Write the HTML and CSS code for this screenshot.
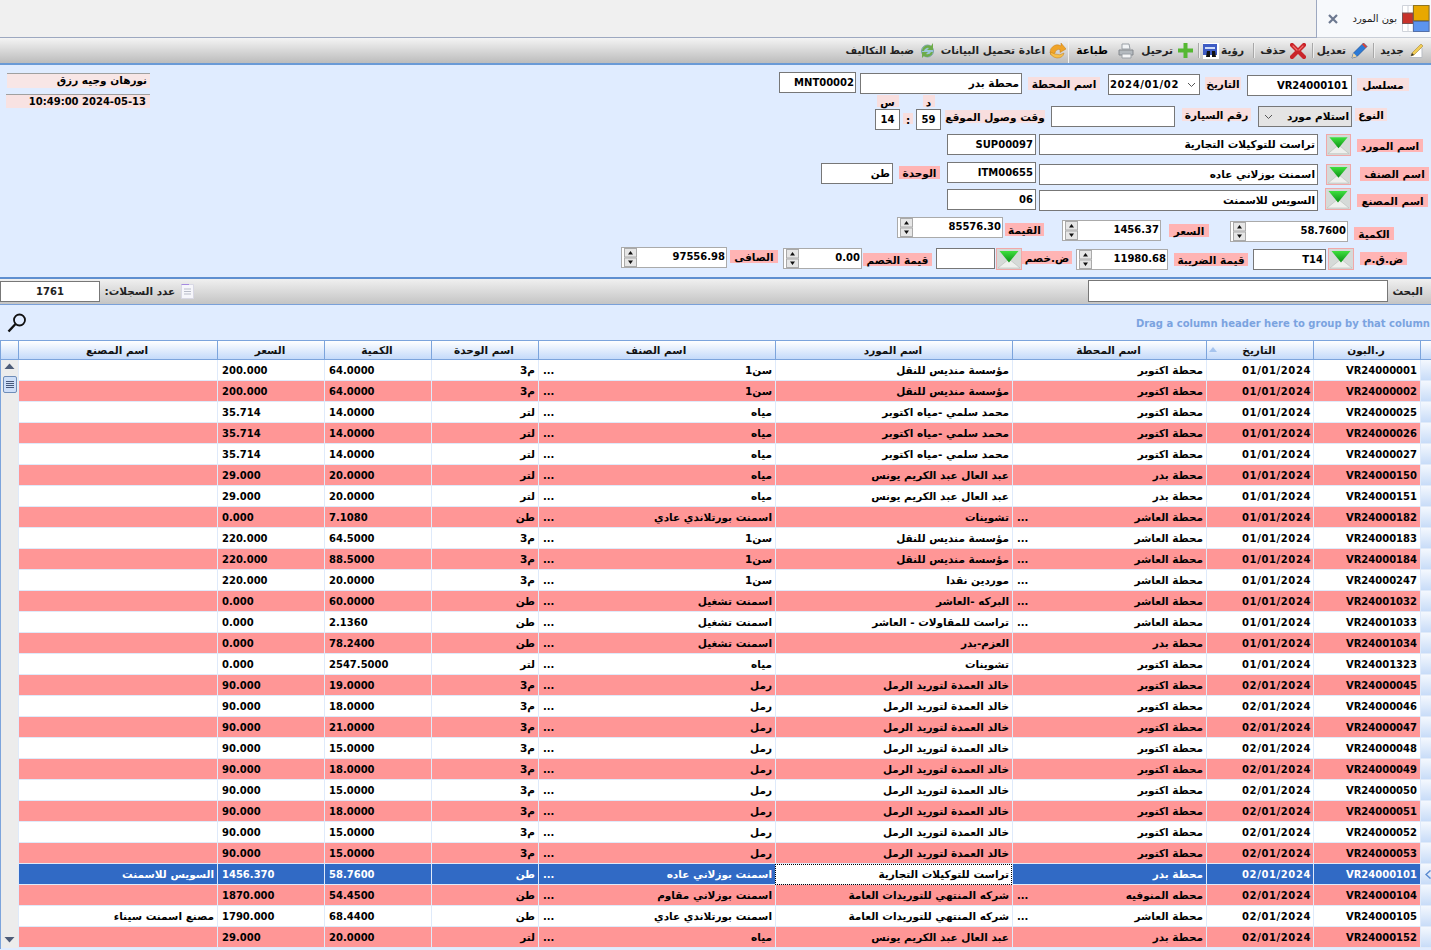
FILE: index.html
```html
<!DOCTYPE html>
<html lang="ar">
<head>
<meta charset="utf-8">
<title>بون المورد</title>
<link rel="stylesheet" href="styles.css">
</head>
<body>
<svg class="defs" width="0" height="0">
  <defs>
    <linearGradient id="gr" x1="0" y1="0" x2="0" y2="1"><stop offset="0" stop-color="#3fe03f"/><stop offset="1" stop-color="#0a8f14"/></linearGradient>
    <symbol id="drop" viewBox="0 0 24 20">
      <path d="M1 3 H23 V18 H1Z" fill="#d6dad8"/>
      <path d="M1 19 L12 10 L23 19Z" fill="#eef0ee" stroke="#b8bcb8" stroke-width=".6"/>
      <path d="M2.500 2 H21.500 L12 13.500Z" fill="url(#gr)"/>
    </symbol>
    <symbol id="spinb" viewBox="0 0 13 19">
      <rect x=".5" y=".5" width="12" height="8.5" fill="#e6e6e6" stroke="#aaa"/>
      <rect x=".5" y="10" width="12" height="8.5" fill="#e6e6e6" stroke="#aaa"/>
      <path d="M4 6.500 L6.500 3 L9 6.500Z M4 12.500 H9 L6.500 16Z" fill="#111"/>
    </symbol>
  </defs>
</svg>

<header class="tabbar">
  <div class="tab">
    <svg class="tab-icon" width="28" height="27" viewBox="0 0 28 27">
      <path d="M.5.5H27.5V26.5H.5Z M.5 8.500H11 M.5 18.500H11 M6 .5V8 M6 18V26.500 M11 .5V26" fill="#fff" stroke="#cfd3da"/>
      <rect x="11.500" y=".5" width="15.500" height="15" fill="#e8a800" stroke="#8f7520"/>
      <rect x=".5" y="8" width="10.500" height="10.500" fill="#c8322a" stroke="#7a5050"/>
      <rect x="11.500" y="16.500" width="15.500" height="10" fill="#5c94ee" stroke="#5470a8"/>
    </svg>
    <span class="tab-title">بون المورد</span>
    <svg class="tab-close" width="10" height="10" viewBox="0 0 10 10"><path d="M1 1L9 9M9 1L1 9" stroke="#6c7890" stroke-width="2.200"/></svg>
  </div>
  <div class="tab-rest"></div>
</header>

<nav class="toolbar">
  <button class="tool t-new"><svg width="15" height="15" viewBox="0 0 15 15"><path d="M.5 14.500H13V5" fill="#fff" stroke="#b9bdc4"/><path d="M2 13L3 10 12 1 14 3 5 12Z" fill="#f2cc55" stroke="#a58a3a" stroke-width=".6"/><path d="M2 13L3 10 5 12Z" fill="#333"/></svg><span>جديد</span></button>
  <i class="sep s1"></i>
  <button class="tool t-edit"><svg width="17" height="17" viewBox="0 0 17 17"><path d="M1 16L2.500 11 12.500 1 16 4.500 6 14.500Z" fill="#2c7ad6" stroke="#1b4c92" stroke-width=".7"/><path d="M12.500 1L16 4.500 14.500 6 11 2.500Z" fill="#d8453a"/><path d="M1 16L2.500 11 6 14.500Z" fill="#f0d5a0"/></svg><span>تعديل</span></button>
  <i class="sep s2"></i>
  <button class="tool t-del"><svg width="16" height="16" viewBox="0 0 16 16"><path d="M2 2L14 14M14 2L2 14" stroke="#c9242a" stroke-width="4.200" stroke-linecap="round"/><path d="M3 3L7 7M13 3L9 7" stroke="#f26f6a" stroke-width="1.200" stroke-linecap="round"/></svg><span>حذف</span></button>
  <i class="sep s3"></i>
  <button class="tool t-view"><span>رؤية</span><svg width="16" height="16" viewBox="0 0 16 16"><rect width="16" height="16" fill="#fff"/><rect x="0" y="1" width="14" height="11" fill="#3d5bc4"/><rect x="2" y="4" width="10" height="2" fill="#cfdcf7"/><path d="M4 8h3v6H3zM9 8h3l1 6H9z" fill="#111"/></svg></button>
  <i class="sep s4"></i>
  <button class="tool t-post"><svg width="15" height="15" viewBox="0 0 15 15"><path d="M5.500 0H9.500V5.500H15V9.500H9.500V15H5.500V9.500H0V5.500H5.500Z" fill="#55b832"/></svg><span>ترحيل</span></button>
  <button class="tool t-print"><svg width="16" height="16" viewBox="0 0 16 16"><path d="M4 1H11L12 6H4Z" fill="#f2f4f6" stroke="#9aa0a6"/><path d="M1 7H15V12H1Z" fill="#b4babf" stroke="#85898e"/><path d="M4 11H13V15H4Z" fill="#f5f6f7" stroke="#9aa0a6"/></svg><strong>طباعة</strong></button>
  <i class="sep s5"></i>
  <button class="tool t-reload"><svg width="17" height="16" viewBox="0 0 17 16"><path d="M2 12A7 7 0 0 1 12 3V0L17 6 11 9.500V6.500A4 4 0 0 0 6 10Z" fill="#f0a428" stroke="#c47a14" stroke-width=".5"/><path d="M1 9Q2 14 8 15Q14 15 15 10Q11 13 6 11Z" fill="#f7c04a" stroke="#c47a14" stroke-width=".5"/></svg><span>اعادة تحميل البيانات</span></button>
  <button class="tool t-cost"><svg width="15" height="16" viewBox="0 0 15 16"><circle cx="7.500" cy="8" r="6" fill="#9bc6d8" stroke="#7aa0a8"/><path d="M2 8A6 6 0 0 1 11 3L13 0V7H7L9 5A4 4 0 0 0 4 8ZM13 9A6 6 0 0 1 4 13L2 15V9H8L6 11A4 4 0 0 0 11 9Z" fill="#6dab4a"/></svg><span>ضبط التكاليف</span></button>
</nav>

<section class="form">
  <div class="row r1">
    <label class="lb pale l-serial">مسلسل</label>
    <div class="in i-serial">VR24000101</div>
    <label class="lb pale l-date">التاريخ</label>
    <div class="in sel i-date"><span>2024/01/02</span><svg width="9" height="6" viewBox="0 0 9 6"><path d="M1 1L4.500 4.500 8 1" fill="none" stroke="#555"/></svg></div>
    <label class="lb pale l-station">اسم المحطة</label>
    <div class="in i-station">محطة بدر</div>
    <div class="in i-stcode">MNT00002</div>
    <div class="stamp s-user">نورهان وجيه رزق</div>
  </div>
  <div class="row r2">
    <label class="lb pale l-type">النوع</label>
    <div class="in sel dis i-type"><span>استلام مورد</span><svg width="9" height="6" viewBox="0 0 9 6"><path d="M1 1L4.500 4.500 8 1" fill="none" stroke="#555"/></svg></div>
    <label class="lb pale l-plate">رقم السيارة</label>
    <div class="in i-plate"></div>
    <label class="lb pale l-arrive">وقت وصول الموقع</label>
    <div class="tcol t-min"><label class="lb pale l-m">د</label><div class="in i-time">59</div></div>
    <label class="lb pale l-colon">:</label>
    <div class="tcol t-hour"><label class="lb pale l-h">س</label><div class="in i-time">14</div></div>
    <div class="stamp s-date" dir="ltr">10:49:00 2024-05-13</div>
  </div>
  <div class="row r3">
    <label class="lb l-sup">اسم المورد</label>
    <button class="pick p-a"><svg><use href="#drop"/></svg></button>
    <div class="in i-name i-n3">تراست للتوكيلات التجارية</div>
    <div class="in i-code">SUP00097</div>
  </div>
  <div class="row r4">
    <label class="lb l-item">اسم الصنف</label>
    <button class="pick p-b"><svg><use href="#drop"/></svg></button>
    <div class="in i-name i-n4">اسمنت بوزلاني عاده</div>
    <div class="in i-code i-c4">ITM00655</div>
    <label class="lb l-unit">الوحدة</label>
    <div class="in i-unit">طن</div>
  </div>
  <div class="row r5">
    <label class="lb l-fac">اسم المصنع</label>
    <button class="pick p-c"><svg><use href="#drop"/></svg></button>
    <div class="in i-name i-n5">السويس للاسمنت</div>
    <div class="in i-code i-c5">06</div>
  </div>
  <div class="row r6">
    <label class="lb l-qty">الكمية</label>
    <div class="spin sp-qty"><span>58.7600</span><svg width="13" height="19"><use href="#spinb"/></svg></div>
    <label class="lb l-price">السعر</label>
    <div class="spin sp-price"><span>1456.37</span><svg width="13" height="19"><use href="#spinb"/></svg></div>
    <label class="lb l-val">القيمة</label>
    <div class="spin sp-val"><span>85576.30</span><svg width="13" height="19"><use href="#spinb"/></svg></div>
  </div>
  <div class="row r7">
    <label class="lb l-vat">ض.ق.م</label>
    <button class="pick p-d"><svg><use href="#drop"/></svg></button>
    <div class="in i-vat">T14</div>
    <label class="lb l-tax">قيمة الضريبة</label>
    <div class="spin sp-tax"><span>11980.68</span><svg width="13" height="19"><use href="#spinb"/></svg></div>
    <label class="lb l-dt">ض.خصم</label>
    <button class="pick p-e"><svg><use href="#drop"/></svg></button>
    <div class="in i-dt"></div>
    <label class="lb l-disc">قيمة الخصم</label>
    <div class="spin sp-disc"><span>0.00</span><svg width="13" height="19"><use href="#spinb"/></svg></div>
    <label class="lb l-net">الصافى</label>
    <div class="spin sp-net"><span>97556.98</span><svg width="13" height="19"><use href="#spinb"/></svg></div>
  </div>
</section>

<section class="searchbar">
  <label class="s-label">البحث</label>
  <div class="in s-input"></div>
  <svg class="s-doc" width="13" height="15" viewBox="0 0 13 15"><path d="M.5.5H12.500V14.500H.5Z" fill="#f6f6fb" stroke="#d8d8e4"/><path d="M.5.5H8" stroke="#a58ae0"/><path d="M3 5H10M3 7.500H10M3 10H10" stroke="#b8bcc8"/></svg>
  <span class="s-count-label">عدد السجلات:</span>
  <div class="in s-count">1761</div>
</section>

<section class="groupbar">
  <svg class="lens" width="20" height="20" viewBox="0 0 20 20"><circle cx="12.500" cy="7" r="5.500" fill="none" stroke="#111" stroke-width="1.800"/><path d="M8.500 11L1.500 18.500" stroke="#111" stroke-width="2.400"/></svg>
  <span class="group-hint">Drag a column header here to group by that column</span>
</section>

<section class="grid">
  <aside class="gutter">
    <div class="gutter-head"></div>
    <div class="scroll">
      <svg width="11" height="7" viewBox="0 0 11 7"><path d="M.5 6L5.500 .5 10.500 6Z" fill="#4d5c78"/></svg>
      <div class="thumb"><i></i><i></i><i></i><i></i></div>
      <svg class="down" width="11" height="7" viewBox="0 0 11 7"><path d="M.5 1L5.500 6.500 10.500 1Z" fill="#4d5c78"/></svg>
    </div>
  </aside>
  <table>
    <colgroup>
      <col class="c-fac"><col class="c-num"><col class="c-num"><col class="c-num"><col class="c-wide"><col class="c-wide"><col class="c-st"><col class="c-num"><col class="c-num"><col class="c-sel">
    </colgroup>
    <thead>
      <tr><th>اسم المصنع</th><th>السعر</th><th>الكمية</th><th>اسم الوحدة</th><th>اسم الصنف</th><th>اسم المورد</th><th>اسم المحطة</th><th class="sorted">التاريخ</th><th>ر.البون</th><th></th></tr>
    </thead>
    <tbody>
      <tr><td></td><td class="n">200.000</td><td class="n">64.0000</td><td>م3</td><td><b>...</b>سن1</td><td>مؤسسة منديس للنقل</td><td>محطة اكتوبر</td><td class="d">01/01/2024</td><td class="d">VR24000001</td><td class="s"></td></tr>
      <tr><td></td><td class="n">200.000</td><td class="n">64.0000</td><td>م3</td><td><b>...</b>سن1</td><td>مؤسسة منديس للنقل</td><td>محطة اكتوبر</td><td class="d">01/01/2024</td><td class="d">VR24000002</td><td class="s"></td></tr>
      <tr><td></td><td class="n">35.714</td><td class="n">14.0000</td><td>لتر</td><td><b>...</b>مياه</td><td>محمد سلمي -مياه اكتوبر</td><td>محطة اكتوبر</td><td class="d">01/01/2024</td><td class="d">VR24000025</td><td class="s"></td></tr>
      <tr><td></td><td class="n">35.714</td><td class="n">14.0000</td><td>لتر</td><td><b>...</b>مياه</td><td>محمد سلمي -مياه اكتوبر</td><td>محطة اكتوبر</td><td class="d">01/01/2024</td><td class="d">VR24000026</td><td class="s"></td></tr>
      <tr><td></td><td class="n">35.714</td><td class="n">14.0000</td><td>لتر</td><td><b>...</b>مياه</td><td>محمد سلمي -مياه اكتوبر</td><td>محطة اكتوبر</td><td class="d">01/01/2024</td><td class="d">VR24000027</td><td class="s"></td></tr>
      <tr><td></td><td class="n">29.000</td><td class="n">20.0000</td><td>لتر</td><td><b>...</b>مياه</td><td>عبد العال عبد الكريم يونس</td><td>محطة بدر</td><td class="d">01/01/2024</td><td class="d">VR24000150</td><td class="s"></td></tr>
      <tr><td></td><td class="n">29.000</td><td class="n">20.0000</td><td>لتر</td><td><b>...</b>مياه</td><td>عبد العال عبد الكريم يونس</td><td>محطة بدر</td><td class="d">01/01/2024</td><td class="d">VR24000151</td><td class="s"></td></tr>
      <tr><td></td><td class="n">0.000</td><td class="n">7.1080</td><td>طن</td><td><b>...</b>اسمنت بورتلاندي عادي</td><td>تشوينات</td><td><b>...</b>محطة العاشر</td><td class="d">01/01/2024</td><td class="d">VR24000182</td><td class="s"></td></tr>
      <tr><td></td><td class="n">220.000</td><td class="n">64.5000</td><td>م3</td><td><b>...</b>سن1</td><td>مؤسسة منديس للنقل</td><td><b>...</b>محطة العاشر</td><td class="d">01/01/2024</td><td class="d">VR24000183</td><td class="s"></td></tr>
      <tr><td></td><td class="n">220.000</td><td class="n">88.5000</td><td>م3</td><td><b>...</b>سن1</td><td>مؤسسة منديس للنقل</td><td><b>...</b>محطة العاشر</td><td class="d">01/01/2024</td><td class="d">VR24000184</td><td class="s"></td></tr>
      <tr><td></td><td class="n">220.000</td><td class="n">20.0000</td><td>م3</td><td><b>...</b>سن1</td><td>موردين نقدا</td><td><b>...</b>محطة العاشر</td><td class="d">01/01/2024</td><td class="d">VR24000247</td><td class="s"></td></tr>
      <tr><td></td><td class="n">0.000</td><td class="n">60.0000</td><td>طن</td><td><b>...</b>اسمنت تشغيل</td><td>البركه -العاشر</td><td><b>...</b>محطة العاشر</td><td class="d">01/01/2024</td><td class="d">VR24001032</td><td class="s"></td></tr>
      <tr><td></td><td class="n">0.000</td><td class="n">2.1360</td><td>طن</td><td><b>...</b>اسمنت تشغيل</td><td>تراست للمقاولات - العاشر</td><td><b>...</b>محطة العاشر</td><td class="d">01/01/2024</td><td class="d">VR24001033</td><td class="s"></td></tr>
      <tr><td></td><td class="n">0.000</td><td class="n">78.2400</td><td>طن</td><td><b>...</b>اسمنت تشغيل</td><td>العزم-بدر</td><td>محطة بدر</td><td class="d">01/01/2024</td><td class="d">VR24001034</td><td class="s"></td></tr>
      <tr><td></td><td class="n">0.000</td><td class="n">2547.5000</td><td>لتر</td><td><b>...</b>مياه</td><td>تشوينات</td><td>محطة اكتوبر</td><td class="d">01/01/2024</td><td class="d">VR24001323</td><td class="s"></td></tr>
      <tr><td></td><td class="n">90.000</td><td class="n">19.0000</td><td>م3</td><td><b>...</b>رمل</td><td>خالد العمدة لتوريد الرمل</td><td>محطة اكتوبر</td><td class="d">02/01/2024</td><td class="d">VR24000045</td><td class="s"></td></tr>
      <tr><td></td><td class="n">90.000</td><td class="n">18.0000</td><td>م3</td><td><b>...</b>رمل</td><td>خالد العمدة لتوريد الرمل</td><td>محطة اكتوبر</td><td class="d">02/01/2024</td><td class="d">VR24000046</td><td class="s"></td></tr>
      <tr><td></td><td class="n">90.000</td><td class="n">21.0000</td><td>م3</td><td><b>...</b>رمل</td><td>خالد العمدة لتوريد الرمل</td><td>محطة اكتوبر</td><td class="d">02/01/2024</td><td class="d">VR24000047</td><td class="s"></td></tr>
      <tr><td></td><td class="n">90.000</td><td class="n">15.0000</td><td>م3</td><td><b>...</b>رمل</td><td>خالد العمدة لتوريد الرمل</td><td>محطة اكتوبر</td><td class="d">02/01/2024</td><td class="d">VR24000048</td><td class="s"></td></tr>
      <tr><td></td><td class="n">90.000</td><td class="n">18.0000</td><td>م3</td><td><b>...</b>رمل</td><td>خالد العمدة لتوريد الرمل</td><td>محطة اكتوبر</td><td class="d">02/01/2024</td><td class="d">VR24000049</td><td class="s"></td></tr>
      <tr><td></td><td class="n">90.000</td><td class="n">15.0000</td><td>م3</td><td><b>...</b>رمل</td><td>خالد العمدة لتوريد الرمل</td><td>محطة اكتوبر</td><td class="d">02/01/2024</td><td class="d">VR24000050</td><td class="s"></td></tr>
      <tr><td></td><td class="n">90.000</td><td class="n">18.0000</td><td>م3</td><td><b>...</b>رمل</td><td>خالد العمدة لتوريد الرمل</td><td>محطة اكتوبر</td><td class="d">02/01/2024</td><td class="d">VR24000051</td><td class="s"></td></tr>
      <tr><td></td><td class="n">90.000</td><td class="n">15.0000</td><td>م3</td><td><b>...</b>رمل</td><td>خالد العمدة لتوريد الرمل</td><td>محطة اكتوبر</td><td class="d">02/01/2024</td><td class="d">VR24000052</td><td class="s"></td></tr>
      <tr><td></td><td class="n">90.000</td><td class="n">15.0000</td><td>م3</td><td><b>...</b>رمل</td><td>خالد العمدة لتوريد الرمل</td><td>محطة اكتوبر</td><td class="d">02/01/2024</td><td class="d">VR24000053</td><td class="s"></td></tr>
      <tr class="selected"><td>السويس للاسمنت</td><td class="n">1456.370</td><td class="n">58.7600</td><td>طن</td><td><b>...</b>اسمنت بوزلاني عاده</td><td class="focus">تراست للتوكيلات التجارية</td><td>محطة بدر</td><td class="d">02/01/2024</td><td class="d">VR24000101</td><td class="s"><svg width="6" height="9" viewBox="0 0 6 9"><path d="M5.500 .5L1 4.500 5.500 8.500" fill="none" stroke="#5a8ad0" stroke-width="1.500"/></svg></td></tr>
      <tr><td></td><td class="n">1870.000</td><td class="n">54.4500</td><td>طن</td><td><b>...</b>اسمنت بوزلاني مقاوم</td><td>شركه المنتهي للتوريدات العامة</td><td><b>...</b>محطه المنوفيه</td><td class="d">02/01/2024</td><td class="d">VR24000104</td><td class="s"></td></tr>
      <tr><td>مصنع اسمنت سيناء</td><td class="n">1790.000</td><td class="n">68.4400</td><td>طن</td><td><b>...</b>اسمنت بورتلاندي عادي</td><td>شركه المنتهي للتوريدات العامة</td><td><b>...</b>محطة العاشر</td><td class="d">02/01/2024</td><td class="d">VR24000105</td><td class="s"></td></tr>
      <tr><td></td><td class="n">29.000</td><td class="n">20.0000</td><td>لتر</td><td><b>...</b>مياه</td><td>عبد العال عبد الكريم يونس</td><td>محطة بدر</td><td class="d">02/01/2024</td><td class="d">VR24000152</td><td class="s"></td></tr>
    </tbody>
  </table>
</section>
</body>
</html>
```
FILE: styles.css
```css
* { box-sizing: border-box; }
html, body { margin: 0; padding: 0; height: 100%; overflow: hidden; }
body {
  width: 1431px;
  height: 950px;
  background: #e0ecff;
  color: #000;
  font: bold 10.5px/13px "DejaVu Sans", "Liberation Sans", sans-serif;
}
.defs { position: absolute; }
svg { display: block; flex: none; }
button { font: inherit; color: inherit; border: 0; background: none; padding: 0; margin: 0; }

/* tab strip */
.tabbar { display: flex; flex-direction: row-reverse; height: 38px; background: #f7f9fc; border-bottom: 1px solid #c8cdd6; }
.tab { width: 114px; display: flex; flex-direction: row-reverse; align-items: flex-start; padding: 5px 1px 0 0; }
.tab-title { font-weight: normal; font-size: 10px; margin: 7px 5px 0 0; direction: rtl; color: #222; }
.tab-close { margin: 9px 14px 0 0; }
.tab-rest { flex: 1; height: 38px; background: #f0f0f0; border-right: 1px solid #9da8c0; border-bottom: 1px solid #9da8c0; }

/* toolbar */
.toolbar {
  display: flex;
  flex-direction: row-reverse;
  align-items: center;
  height: 27px;
  padding-right: 7px;
  background: linear-gradient(#f4f4f4, #bcbcbc);
  border-bottom: 2px solid #6a9ad6;
  color: #222;
}
.tool { display: flex; flex-direction: row; align-items: center; direction: rtl; white-space: nowrap; flex: none; }
.tool span, .tool strong { font-weight: bold; }
.tool strong { color: #000; }
.sep { width: 1px; height: 15px; background: #a8a8a8; flex: none; box-shadow: 1px 0 0 #eee; }
.t-new span { margin-right: 5px; width: 24px; }
.s1 { margin-right: 6px; }
.t-edit { margin-right: 5px; }
.t-edit span { margin-right: 5px; width: 28px; }
.s2 { margin-right: 5px; }
.t-del { margin-right: 6px; }
.t-del span { margin-right: 4px; width: 25px; }
.s3 { margin-right: 7px; }
.t-view { margin-right: 9px; }
.t-view span { width: 22px; }
.t-view svg { margin-right: 3px; }
.s4 { margin-right: 4px; }
.t-post { margin-right: 5px; }
.t-post span { margin-right: 5px; width: 30px; }
.t-print { margin-right: 9px; }
.t-print strong { margin-right: 10px; width: 30px; }
.s5 { margin-right: 9px; background: #f2f2f2; height: 24px; box-shadow: none; }
.t-reload { margin-right: 2px; }
.t-reload span { margin-right: 4px; width: 103px; }
.t-cost { margin-right: 7px; }
.t-cost span { margin-right: 6px; width: 67px; font-size: 10px; }

/* header form */
.form { height: 214px; padding-top: 7px; border-bottom: 2px solid #5f8fd0; background: #e0ecff; }
.row { display: flex; direction: rtl; align-items: flex-start; }
.r1 { height: 23px; }
.r2 { height: 39px; }
.r3 { height: 28px; }
.r4 { height: 26px; }
.r5 { height: 29px; }
.r6 { height: 30px; }
.r7 { height: 24px; }

.lb { flex: none; display: block; height: 13px; background: #ffb4b4; text-align: center; line-height: 15px; white-space: nowrap; }
.lb.pale { background: #f8dede; }
.in {
  flex: none;
  height: 21px;
  background: #fff;
  border: 1px solid #777;
  padding: 0 2px;
  line-height: 19px;
  text-align: right;
  white-space: nowrap;
  overflow: hidden;
}
.sel { display: flex; flex-direction: row-reverse; align-items: center; justify-content: space-between; padding: 0 1px 0 5px; }
.sel span { display: block; }
.dis { background: #e4e4e4; }
.pick { flex: none; display: block; background: #d6dad8; border: 1px solid #f0a8a8; padding: 0; }
.pick svg { width: 100%; height: 100%; }
.spin {
  flex: none;
  height: 21px;
  background: #fff;
  border: 1px solid #aaa;
  display: flex;
  flex-direction: row-reverse;
  justify-content: space-between;
  align-items: center;
  direction: ltr;
  padding: 0 1px 0 2px;
  font-size: 10px;
}
.spin span { line-height: 13px; margin-top: -3px; }

.stamp { flex: none; background: #f8e6e6; text-align: right; padding-right: 3px; white-space: nowrap; }
.s-user { width: 143px; height: 15px; margin: 1px auto 0 7px; border-top: 1px solid #a0a0a0; }
.s-date { width: 144px; height: 14px; margin: -1px auto 0 6px; border-top: 1px solid #a0a0a0; direction: ltr; background: #f8e2e2; font-size: 10px; padding-right: 4px; }

.l-serial { width: 52px; margin: 6px 22px 0 0; }
.i-serial { width: 105px; margin: 3px 5px 0 0; direction: ltr; font-size: 10px; padding-right: 3px; }
.l-date { width: 36px; margin: 5px 6px 0 0; }
.i-date { width: 92px; margin: 2px 5px 0 0; direction: ltr; flex-direction: row; padding: 0 3px 0 1px; font-size: 10px; letter-spacing: .6px; }
.l-station { width: 72px; margin: 5px 8px 0 0; }
.i-station { width: 162px; margin: 1px 6px 0 0; }
.i-stcode { width: 77px; margin: 0 4px 0 0; direction: ltr; font-size: 10px; padding-right: 1px; }

.l-type { width: 32px; margin: 13px 44px 0 0; }
.i-type { width: 94px; margin: 11px 3px 0 0; flex-direction: row; padding: 0 2px 0 5px; direction: rtl; }
.l-plate { width: 69px; margin: 13px 7px 0 0; }
.i-plate { width: 124px; margin: 11px 7px 0 0; }
.l-arrive { width: 100px; margin: 15px 6px 0 0; }
.tcol { flex: none; display: flex; flex-direction: column; align-items: center; }
.t-min { width: 25px; margin-right: 4px; }
.t-hour { width: 25px; margin-right: 3px; }
.l-m { width: 12px; height: 12px; }
.l-h { width: 22px; height: 12px; }
.i-time { width: 25px; margin-top: 2px; text-align: center; direction: ltr; font-size: 10px; }
.l-colon { width: 10px; height: 11px; margin: 18px 3px 0 0; }

.l-sup { width: 66px; margin: 5px 8px 0 0; }
.p-a { width: 25px; height: 22px; margin: 0 6px 0 0; }
.i-name { width: 279px; margin: 0 8px 0 0; }
.i-code { width: 89px; margin: 0 3px 0 0; direction: ltr; font-size: 10px; }

.l-item { width: 69px; height: 14px; margin: 5px 2px 0 0; }
.p-b { width: 25px; height: 21px; margin: 2px 9px 0 0; }
.i-n4 { margin-top: 2px; }
.i-c4 { margin-top: 0; }
.l-unit { width: 41px; margin: 4px 7px 0 0; }
.i-unit { width: 72px; margin: 1px 6px 0 0; }

.l-fac { width: 71px; margin: 6px 3px 0 0; }
.p-c { width: 26px; height: 22px; margin: 0 6px 0 0; }
.i-n5 { margin-top: 2px; margin-right: 7px; }
.i-c5 { margin-top: 1px; }

.l-qty { width: 40px; margin: 10px 37px 0 0; }
.sp-qty { width: 118px; margin: 4px 6px 0 0; }
.l-price { width: 40px; margin: 7px 21px 0 0; }
.sp-price { width: 99px; margin: 3px 8px 0 0; }
.l-val { width: 39px; margin: 6px 18px 0 0; }
.sp-val { width: 106px; margin: 0 2px 0 0; }

.l-vat { width: 47px; margin: 5px 24px 0 0; }
.p-d { width: 26px; height: 22px; margin: 1px 6px 0 0; }
.i-vat { width: 73px; margin: 2px 2px 0 0; direction: ltr; font-size: 10px; }
.l-tax { width: 74px; margin: 6px 5px 0 0; }
.sp-tax { width: 92px; margin: 2px 6px 0 0; }
.l-dt { width: 50px; margin: 4px 4px 0 0; }
.p-e { width: 26px; height: 22px; margin: 1px 0 0 0; }
.i-dt { width: 59px; margin: 1px 1px 0 0; }
.l-disc { width: 69px; margin: 6px 4px 0 0; }
.sp-disc { width: 79px; margin: 1px 1px 0 0; }
.l-net { width: 48px; margin: 3px 5px 0 0; }
.sp-net { width: 106px; margin: 0 3px 0 0; }

/* search strip */
.searchbar {
  display: flex;
  direction: rtl;
  align-items: center;
  height: 26px;
  background: linear-gradient(#f0f0f0, #c4c4c4);
  border-bottom: 1px solid #7aa0d8;
  color: #222;
}
.s-label { margin-right: 8px; width: 31px; text-align: center; }
.s-input { width: 300px; height: 22px; margin-right: 4px; margin-top: -1px; }
.s-doc { margin-right: 894px; }
.s-count-label { margin-right: 6px; width: 72px; white-space: nowrap; }
.s-count { width: 100px; height: 21px; margin-right: 4px; text-align: center; direction: ltr; font-size: 10px; }

/* group-by strip */
.groupbar { display: flex; justify-content: space-between; align-items: center; height: 35px; padding: 0 1px 0 7px; background: #e0ecff; }
.group-hint { color: #7ba3e0; font-size: 10px; line-height: 14px; margin-top: 3px; }

/* grid */
.grid { display: flex; align-items: flex-start; border-top: 1px solid #7ca4dc; border-left: 1px solid #7ca4dc; height: 609px; }
.gutter { width: 17px; flex: none; }
.gutter-head { height: 19px; background: linear-gradient(#fff, #c4dafa); border-bottom: 1px solid #7ca4dc; }
.scroll { height: 588px; background: #ececec; display: flex; flex-direction: column; align-items: center; padding: 3px 0 5px; }
.thumb { width: 14px; height: 17px; margin-top: 6px; background: #cfdff8; border: 1px solid #6f8db8; border-radius: 2px; display: flex; flex-direction: column; justify-content: center; gap: 1px; padding: 0 2px; }
.thumb i { height: 1px; background: #48597a; }
.down { margin-top: auto; }

table { table-layout: fixed; width: 1413px; flex: none; border-collapse: separate; border-spacing: 0; }
.c-fac { width: 199px; }
.c-num { width: 107px; }
.c-wide { width: 237px; }
.c-st { width: 194px; }
.c-sel { width: 11px; }
th {
  height: 19px;
  padding: 0;
  font-weight: bold;
  line-height: 18px;
  text-align: center;
  direction: rtl;
  color: #111;
  background: linear-gradient(#fff, #c4dafa);
  border-left: 1px solid #7ca4dc;
  border-bottom: 1px solid #7ca4dc;
}
th.sorted { position: relative; }
th.sorted::before { content: ""; position: absolute; left: 3px; top: 6px; border: 4px solid transparent; border-top: 0; border-bottom: 5px solid #a6c4ee; }
td {
  height: 21px;
  padding: 0 3px 0 4px;
  line-height: 19px;
  background: #fff;
  text-align: right;
  direction: rtl;
  white-space: nowrap;
  overflow: hidden;
  border-left: 1px solid #dfeafa;
  border-bottom: 1px solid #dfeafa;
}
tbody tr:nth-child(even) td { background: #ff9696; }
td b { float: left; font-size: 10px; }
td.n { text-align: left; direction: ltr; font-size: 10px; }
td.d { direction: ltr; font-size: 10px; }
td:nth-child(8) { letter-spacing: .6px; padding-right: 2px; }
td.s, tbody tr:nth-child(even) td.s { background: linear-gradient(#f4f8fe, #c8dcf8); padding: 0; }
td.s svg { margin-left: 4px; }
tbody tr.selected td { background: #316ac5; color: #fff; }
tbody tr.selected td.s { background: linear-gradient(#f4f8fe, #c8dcf8); }
tbody tr.selected td.focus { background: #fff; color: #000; outline: 1px dotted #000; outline-offset: -1px; }
```
